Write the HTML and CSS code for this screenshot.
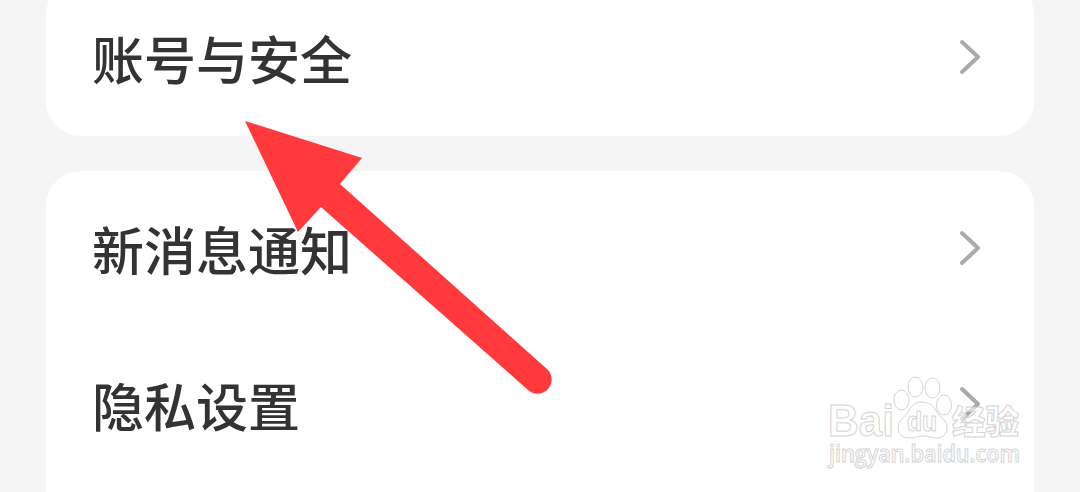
FILE: index.html
```html
<!DOCTYPE html>
<html lang="zh-CN">
<head>
    <meta charset="UTF-8">
    <meta name="viewport" content="width=device-width, initial-scale=1.0">
    <title>设置</title>
    <link rel="stylesheet" href="styles.css">
</head>
<body>
    <main class="page">
        <section class="card card-top">
            <div class="row">
                <span class="label">账号与安全</span>
                <svg class="chevron" viewBox="0 0 24 38"><path d="M4 3 L20 18 L4 33"/></svg>
            </div>
        </section>

        <section class="card card-bottom">
            <div class="row">
                <span class="label">新消息通知</span>
                <svg class="chevron" viewBox="0 0 24 38"><path d="M4 3 L20 18 L4 33"/></svg>
            </div>
            <div class="row">
                <span class="label">隐私设置</span>
                <svg class="chevron" viewBox="0 0 24 38"><path d="M4 3 L20 18 L4 33"/></svg>
            </div>
        </section>

        <!-- red pointer arrow -->
        <svg class="arrow" viewBox="0 0 310 276">
            <path d="M3 3 L120 40 L98 66 L305 251 A14 14 0 0 1 286 272 L79 89 L56 114 Z"/>
        </svg>

        <!-- watermark -->
        <svg class="watermark" viewBox="0 0 210 115">
            <text class="wm-logo" x="8" y="71" textLength="66" lengthAdjust="spacingAndGlyphs">Bai</text>
            <ellipse cx="81.500" cy="35" rx="7.500" ry="10"/>
            <ellipse cx="95.500" cy="22" rx="7.500" ry="10"/>
            <ellipse cx="112.500" cy="23" rx="7.500" ry="10"/>
            <ellipse cx="124" cy="40" rx="7.500" ry="10"/>
            <path d="M101 37 C94 37 91 42 88 47 C84 53 78 56 78 63 C78 70 83 73 90 73 C95 73 97 71 103 71 C109 71 112 73 117 73 C124 73 127 68 127 62 C127 56 121 53 117 47 C113 40 109 37 101 37 Z"/>
            <text class="wm-du" x="87" y="66" textLength="30" lengthAdjust="spacingAndGlyphs">du</text>
            <text class="wm-cn" x="132" y="69" textLength="67" lengthAdjust="spacingAndGlyphs">经验</text>
            <text class="wm-url" x="9" y="97" textLength="191" lengthAdjust="spacingAndGlyphs">jingyan.baidu.com</text>
        </svg>
    </main>
</body>
</html>
```

FILE: styles.css
```css
* {
    box-sizing: border-box;
}

body {
    margin: 0;
    background-color: #f5f5f5;
    font-family: "Noto Sans CJK SC", sans-serif;
    color: #333;
}

.page {
    position: relative;
    display: flex;
    flex-direction: column;
    gap: 35px;
    height: 492px;
    padding: 0 46px;
    overflow: hidden;
}

.card {
    flex-shrink: 0;
    background-color: #fff;
    border-radius: 35px;
}

/* the first card is scrolled partly out of view */
.card-top {
    margin-top: -20px;
}

.card-bottom {
    height: 400px;
}

.row {
    display: flex;
    align-items: center;
    justify-content: space-between;
    height: 156px;
    padding: 0 52px 0 46px;
}

.label {
    font-size: 52px;
    font-weight: 500;
    line-height: 76px;
}

.chevron {
    width: 24px;
    height: 38px;
    fill: none;
    stroke: #aaa;
    stroke-width: 4;
    stroke-linecap: round;
    stroke-linejoin: round;
}

.arrow {
    position: absolute;
    left: 242px;
    top: 118px;
    width: 310px;
    height: 276px;
    fill: #ff393c;
}

.watermark {
    position: absolute;
    left: 820px;
    top: 365px;
    width: 210px;
    height: 115px;
    overflow: visible;
    opacity: 0.9;
    fill: rgba(255, 255, 255, 0.7);
    stroke: #d0d0d0;
    stroke-width: 1;
}

.wm-logo {
    font-family: "Liberation Sans", sans-serif;
    font-size: 44px;
    font-weight: bold;
}

.wm-du {
    font-family: "Liberation Sans", sans-serif;
    font-size: 27px;
    font-weight: bold;
}

.wm-cn {
    font-size: 33px;
    font-weight: 900;
}

.wm-url {
    font-family: "Open Sans", sans-serif;
    font-size: 23px;
    font-weight: 600;
}
```
